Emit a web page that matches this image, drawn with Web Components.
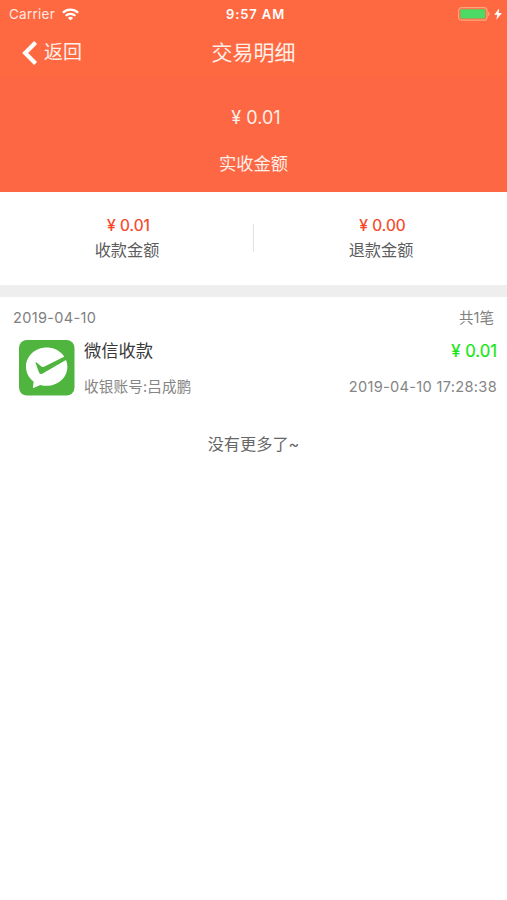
<!DOCTYPE html>
<html lang="zh-CN">
<head>
<meta charset="UTF-8">
<meta name="viewport" content="width=device-width, initial-scale=1">
<title>交易明细</title>
<style>
  body {
    margin: 0;
    min-height: 100vh;
    background: #fff;
    font-family: Inter, "Noto Sans CJK SC", sans-serif;
    color: #666;
  }
</style>
</head>
<body>
<trade-page></trade-page>

<script>
class StatusBar extends HTMLElement {
  constructor() {
    super();
    this.attachShadow({ mode: 'open' });
  }
  connectedCallback() {
    this.shadowRoot.innerHTML = `
      <style>
        :host {
          display: grid;
          grid-template-columns: 1fr auto 1fr;
          align-items: center;
          height: 28px;
          padding: 0 5px 0 9px;
          font-size: 13.5px;
          color: #fff;
        }
        .left, .right { display: flex; align-items: center; height: 26px; }
        .left { gap: 7px; color: #ffe9e2; letter-spacing: .25px; }
        .right { justify-content: flex-end; gap: 4px; }
        .time { font-weight: 600; font-size: 13px; letter-spacing: .9px; line-height: 26px; }
        svg { display: block; }
      </style>
      <div class="left">
        <span>${this.getAttribute('carrier')}</span>
        <svg width="17" height="13" viewBox="0 0 17 13" fill="none" stroke="#fff" stroke-width="2.3">
          <path d="M.9 4.800a10.800 10.800 0 0 1 15.200 0"/>
          <path d="M3.700 7.800a6.800 6.800 0 0 1 9.600 0"/>
          <path d="M8.500 12.600 5.900 10a3.700 3.700 0 0 1 5.200 0z" fill="#fff" stroke="none"/>
        </svg>
      </div>
      <span class="time">${this.getAttribute('time')}</span>
      <div class="right">
        <svg width="32" height="14" viewBox="0 0 32 14">
          <rect x=".6" y=".6" width="28.400" height="12.600" rx="3" fill="none" stroke="#ffa67c" stroke-width="1.2"/>
          <rect x="2.300" y="2.300" width="25" height="9.200" rx="1.200" fill="#4cd964"/>
          <path d="M30.300 4.800c1.500.5 1.500 3.800 0 4.400z" fill="#ffb59f"/>
        </svg>
        <svg width="8" height="12" viewBox="0 0 8 12">
          <path d="M5.200.4.2 6.800h3L2.400 11.700 7.900 5H4.700z" fill="#fff"/>
        </svg>
      </div>
    `;
  }
}

class NavBar extends HTMLElement {
  constructor() {
    super();
    this.attachShadow({ mode: 'open' });
  }
  connectedCallback() {
    this.shadowRoot.innerHTML = `
      <style>
        :host {
          display: grid;
          grid-template-columns: 1fr auto 1fr;
          align-items: center;
          height: 49px;
          padding: 0 22px;
          color: #ffefe9;
        }
        .back { display: flex; align-items: center; gap: 6px; font-size: 19px; line-height: 28px; }
        .back span { padding-top: 1px; }
        .title { font-size: 21px; line-height: 30px; }
        svg { display: block; }
      </style>
      <div class="back">
        <svg width="16" height="24" viewBox="0 0 16 24" fill="none" stroke="#fff" stroke-width="4.2">
          <path d="M13.600 1.600 3.200 12l10.400 10.400"/>
        </svg>
        <span><slot name="back"></slot></span>
      </div>
      <span class="title"><slot></slot></span>
    `;
  }
}

class ReceivedTotal extends HTMLElement {
  constructor() {
    super();
    this.attachShadow({ mode: 'open' });
  }
  connectedCallback() {
    this.shadowRoot.innerHTML = `
      <style>
        :host {
          display: flex;
          flex-direction: column;
          align-items: center;
          gap: 20px;
          height: 87px;
          padding-top: 28px;
          color: #ffefe9;
        }
        .amount { font-size: 18px; line-height: 26px; padding-left: 5px; }
        .label { font-size: 17.3px; line-height: 26px; }
      </style>
      <span class="amount">${this.getAttribute('amount')}</span>
      <span class="label"><slot></slot></span>
    `;
  }
}

class SumCell extends HTMLElement {
  constructor() {
    super();
    this.attachShadow({ mode: 'open' });
  }
  connectedCallback() {
    this.shadowRoot.innerHTML = `
      <style>
        :host {
          display: flex;
          flex: 1;
          flex-direction: column;
          align-items: center;
          line-height: 24px;
        }
        .amount { color: #f5431f; font-size: 15.7px; padding-left: 4px; -webkit-text-stroke: .2px; }
        .label { color: #5c5c5c; font-size: 16.2px; padding-left: 1px; }
      </style>
      <span class="amount">${this.getAttribute('amount')}</span>
      <span class="label"><slot></slot></span>
    `;
  }
}

class SumRow extends HTMLElement {
  constructor() {
    super();
    this.attachShadow({ mode: 'open' });
  }
  connectedCallback() {
    this.shadowRoot.innerHTML = `
      <style>
        :host {
          display: flex;
          align-items: center;
          height: 92px;
          padding-bottom: 1px;
          border-bottom: 12px solid #eee;
        }
        .line { width: 1px; height: 28px; background: #e2e2e2; }
      </style>
      <slot name="in"></slot>
      <div class="line"></div>
      <slot name="out"></slot>
    `;
  }
}

class DayHeader extends HTMLElement {
  constructor() {
    super();
    this.attachShadow({ mode: 'open' });
  }
  connectedCallback() {
    this.shadowRoot.innerHTML = `
      <style>
        :host {
          display: flex;
          justify-content: space-between;
          height: 42px;
          padding: 0 13px;
          font-size: 14.5px;
          line-height: 41px;
          color: #808080;
        }
        .date { letter-spacing: .35px; }
      </style>
      <span class="date">${this.getAttribute('date')}</span>
      <span>${this.getAttribute('count')}</span>
    `;
  }
}

class TradeItem extends HTMLElement {
  constructor() {
    super();
    this.attachShadow({ mode: 'open' });
  }
  connectedCallback() {
    this.shadowRoot.innerHTML = `
      <style>
        :host {
          display: flex;
          align-items: flex-start;
          gap: 9px;
          height: 62px;
          padding: 1px 10px 0 19px;
        }
        .icon { display: block; flex: none; }
        .info { flex: 1; display: flex; flex-direction: column; gap: 12px; margin-top: -1px; }
        .row { display: flex; justify-content: space-between; line-height: 24px; }
        .name { font-size: 17.3px; color: #3a3a3a; }
        .amount { font-size: 16.7px; color: #12e612; -webkit-text-stroke: .2px; }
        .sub { font-size: 14.6px; color: #858585; letter-spacing: .3px; }
        .account { letter-spacing: .15px; }
      </style>
      <svg class="icon" width="56" height="56" viewBox="0 0 56 56">
        <rect width="55.500" height="55.500" rx="8" fill="#4fb53e"/>
        <path d="M27.700 7.500C16.300 7.500 7 16 7 26.700c0 6 2.900 11.300 7.600 14.800L13.900 48.200l7.300-3.300c2.100.6 4.200.9 6.500.9 11.400 0 20.700-8.500 20.700-19.100S39.100 7.500 27.700 7.500z" fill="#fff"/>
        <path d="M17.200 22.300 22.800 26.800q.8.500 1.700.1L46.600 16 48.300 19.300 23.200 33.700q-2.500 1.200-3.300-1.400L16.600 23.100q-.2-1 .6-.8z" fill="#4fb53e"/>
      </svg>
      <div class="info">
        <div class="row name">
          <span><slot></slot></span>
          <span class="amount">${this.getAttribute('amount')}</span>
        </div>
        <div class="row sub">
          <span class="account">${this.getAttribute('account')}</span>
          <span>${this.getAttribute('time')}</span>
        </div>
      </div>
    `;
  }
}

class ListEnd extends HTMLElement {
  constructor() {
    super();
    this.attachShadow({ mode: 'open' });
  }
  connectedCallback() {
    this.shadowRoot.innerHTML = `
      <style>
        :host {
          display: block;
          padding-top: 30px;
          text-align: center;
          font-size: 16.2px;
          line-height: 24px;
          color: #666;
        }
      </style>
      <slot></slot>
    `;
  }
}

class TradePage extends HTMLElement {
  constructor() {
    super();
    this.attachShadow({ mode: 'open' });
  }
  connectedCallback() {
    this.shadowRoot.innerHTML = `
      <style>
        :host { display: block; }
        header { background: linear-gradient(#ff6941 0 77px, #fd6744 77px); }
      </style>
      <header>
        <status-bar carrier="Carrier" time="9:57 AM"></status-bar>
        <nav-bar><span slot="back">返回</span>交易明细</nav-bar>
        <received-total amount="¥ 0.01">实收金额</received-total>
      </header>
      <sum-row>
        <sum-cell slot="in" amount="¥ 0.01">收款金额</sum-cell>
        <sum-cell slot="out" amount="¥ 0.00">退款金额</sum-cell>
      </sum-row>
      <day-header date="2019-04-10" count="共1笔"></day-header>
      <trade-item amount="¥ 0.01" account="收银账号:吕成鹏" time="2019-04-10 17:28:38">微信收款</trade-item>
      <list-end>没有更多了~</list-end>
    `;
  }
}

customElements.define('status-bar', StatusBar);
customElements.define('nav-bar', NavBar);
customElements.define('received-total', ReceivedTotal);
customElements.define('sum-cell', SumCell);
customElements.define('sum-row', SumRow);
customElements.define('day-header', DayHeader);
customElements.define('trade-item', TradeItem);
customElements.define('list-end', ListEnd);
customElements.define('trade-page', TradePage);
</script>
</body>
</html>
